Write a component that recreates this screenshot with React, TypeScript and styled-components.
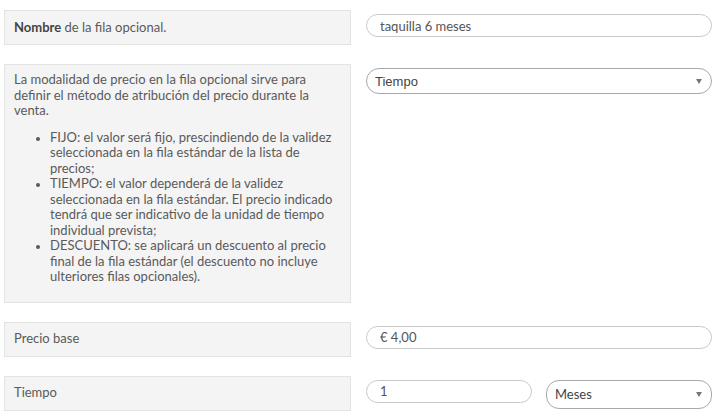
import React from 'react';
import styled, { createGlobalStyle } from 'styled-components';

const GlobalStyle = createGlobalStyle`
  body {
    margin: 0;
    background: #fff;
    font-family: 'Lato', 'Open Sans', sans-serif;
    color: #555;
  }
`;

const Page = styled.div`
  display: flex;
  flex-direction: column;
  gap: 19px;
  padding: 10px 14px 0 4px;
`;

const Row = styled.div`
  display: grid;
  grid-template-columns: 347px 1fr;
  column-gap: 15px;
  align-items: start;
`;

const InfoBox = styled.div<{ $tall?: boolean }>`
  box-sizing: border-box;
  background: #f4f4f4;
  border: 1px solid #e3e3e3;
  min-height: 35px;
  padding: ${(p) => (p.$tall ? '7px 10px 17px 9px' : '0 9px')};
  display: ${(p) => (p.$tall ? 'block' : 'flex')};
  align-items: center;
  font-size: 13px;
  line-height: 15.5px;
  color: #5a5a5a;

  b {
    color: #444;
    font-weight: 700;
  }
`;

const Para = styled.p`
  margin: 0 0 11px;
`;

const List = styled.ul`
  margin: 0;
  padding-left: 36px;

  li::marker {
    font-size: 11px;
  }
`;

const Fields = styled.div`
  display: flex;
  gap: 14px;
  padding-top: 4px;
`;

const TextInput = styled.div<{ $width?: string }>`
  box-sizing: border-box;
  flex: ${(p) => (p.$width ? `0 0 ${p.$width}` : '1')};
  height: 23px;
  border: 1px solid #c9c9c9;
  border-radius: 12px;
  padding: 0 13px;
  display: flex;
  align-items: center;
  font-size: 13px;
  color: #555;
  background: #fff;
`;

const Select = styled.div<{ $raleway?: boolean; $height?: number }>`
  box-sizing: border-box;
  flex: 1;
  height: ${(p) => p.$height ?? 26}px;
  border: 1px solid #a9a9a9;
  border-radius: 13px;
  padding: 0 8px;
  display: flex;
  align-items: center;
  justify-content: space-between;
  font-family: ${(p) => (p.$raleway ? "'Lato', sans-serif" : "'Liberation Sans', Arial, sans-serif")};
  font-size: 13px;
  color: #444;
  background: #fff;
`;

const Arrow = styled.span`
  width: 0;
  height: 0;
  border-left: 3px solid transparent;
  border-right: 3px solid transparent;
  border-top: 5px solid #777;
  margin-right: 1px;
`;

export default function App() {
  return (
    <>
      <GlobalStyle />
      <Page>
        <Row>
          <InfoBox>
            <span>
              <b>Nombre</b> de la fila opcional.
            </span>
          </InfoBox>
          <Fields>
            <TextInput>taquilla 6 meses</TextInput>
          </Fields>
        </Row>

        <Row>
          <InfoBox $tall>
            <Para>
              La modalidad de precio en la fila opcional sirve para definir el método de atribución del
              precio durante la venta.
            </Para>
            <List>
              <li>
                FIJO: el valor será fijo, prescindiendo de la validez seleccionada en la fila estándar de
                la lista de precios;
              </li>
              <li>
                TIEMPO: el valor dependerá de la validez seleccionada en la fila estándar. El precio
                indicado tendrá que ser indicativo de la unidad de tiempo individual prevista;
              </li>
              <li>
                DESCUENTO: se aplicará un descuento al precio final de la fila estándar (el descuento no
                incluye ulteriores filas opcionales).
              </li>
            </List>
          </InfoBox>
          <Fields>
            <Select>
              <span>Tiempo</span>
              <Arrow />
            </Select>
          </Fields>
        </Row>

        <Row>
          <InfoBox>Precio base</InfoBox>
          <Fields>
            <TextInput>€ 4,00</TextInput>
          </Fields>
        </Row>

        <Row>
          <InfoBox>Tiempo</InfoBox>
          <Fields>
            <TextInput $width="166px">1</TextInput>
            <Select $raleway $height={29}>
              <span>Meses</span>
              <Arrow />
            </Select>
          </Fields>
        </Row>
      </Page>
    </>
  );
}
